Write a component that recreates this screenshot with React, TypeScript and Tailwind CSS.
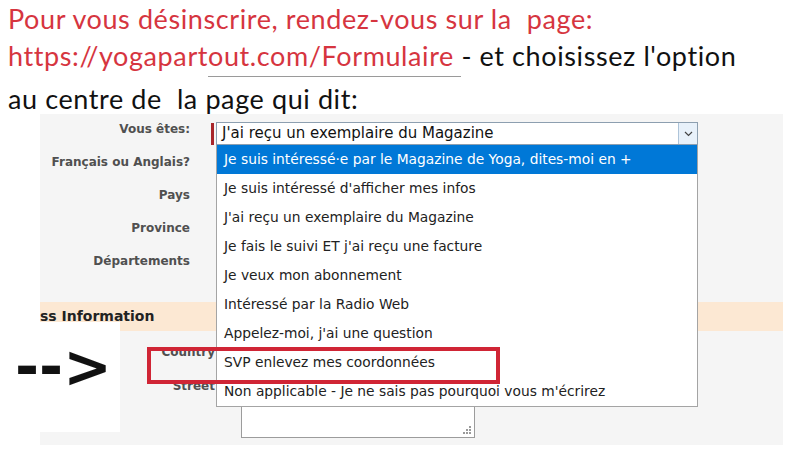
import React from 'react';

const OPTIONS = [
  'Je suis intéressé·e par le Magazine de Yoga, dites-moi en +',
  "Je suis intéressé d'afficher mes infos",
  "J'ai reçu un exemplaire du Magazine",
  "Je fais le suivi ET j'ai reçu une facture",
  'Je veux mon abonnement',
  'Intéressé par la Radio Web',
  "Appelez-moi, j'ai une question",
  'SVP enlevez mes coordonnées',
  "Non applicable - Je ne sais pas pourquoi vous m'écrirez",
];

const LABELS = ['Vous êtes:', 'Français ou Anglais?', 'Pays', 'Province', 'Départements'];

const App: React.FC = () => {
  return (
    <div className="relative w-[800px] h-[470px] overflow-hidden bg-white">
      {/* instructions */}
      <div className="relative z-10 pl-[8px] font-['Lato',sans-serif] text-[27px] tracking-[0.6px] leading-[37px] whitespace-pre text-[#111]">
        <p className="text-[#d6353f]">Pour vous désinscrire, rendez-vous sur la  page:</p>
        <p>
          <span className="text-[#d6353f]">
            https://yogapart<span className="border-b border-[#9a9a9a] pb-[4px]">out.com/Formulaire </span>
          </span>
          - et choisissez l'option
        </p>
        <p className="mt-[6px] h-[34px]">au centre de  la page qui dit:</p>
      </div>

      {/* form screenshot */}
      <div className="ml-[40px] w-[743px] h-[331px] bg-[#f5f5f5] pt-[8px] font-['DejaVu_Sans',sans-serif]">
        <div className="grid grid-cols-[150px_1fr] gap-x-[21px] auto-rows-[33px]">
          {LABELS.map((label, i) => (
            <React.Fragment key={label}>
              <div className="text-right text-[12px] leading-[14px] font-bold text-[#505050]">{label}</div>
              <div>
                {i === 0 && (
                  <div className="flex items-start gap-[2px]">
                    <div className="w-[3px] h-[22px] mt-[1px] bg-[#a8262b]" />
                    <div className="flex w-[482px] h-[23px] border border-[#8d9fb0] bg-white">
                      <span className="flex-1 pl-[5px] text-[15px] leading-[21px] text-[#111]">J'ai reçu un exemplaire du Magazine</span>
                      <span className="flex w-[19px] items-center justify-center border-l border-[#aec4d9] bg-[#e8f1fa]">
                        <svg width="9" height="6" viewBox="0 0 9 6" fill="none" stroke="#444" strokeWidth="1.2">
                          <path d="M1 1l3.5 3.5L8 1" />
                        </svg>
                      </span>
                    </div>
                  </div>
                )}
              </div>
            </React.Fragment>
          ))}
        </div>

        <div className="mt-[15px] h-[29px] bg-[#fce8d3] text-[14px] leading-[29px] font-bold text-[#222]">ss Information</div>

        <div className="grid grid-cols-[175px_1fr] gap-x-[26px] mt-[4px]">
          <div className="h-[34px] flex items-center justify-end text-[12px] font-bold text-[#505050]">Country</div>
          <div />
          <div className="pt-[10px] text-right text-[12px] leading-[14px] font-bold text-[#505050]">Street</div>
          <div className="relative mt-[9px] w-[234px] h-[60px] border border-[#9c9c9c] bg-white">
            <svg className="absolute right-[3px] bottom-[3px]" width="8" height="8" viewBox="0 0 8 8" fill="#9a9a9a">
              <rect x="6" y="0" width="2" height="2" />
              <rect x="3" y="3" width="2" height="2" />
              <rect x="6" y="3" width="2" height="2" />
              <rect x="0" y="6" width="2" height="2" />
              <rect x="3" y="6" width="2" height="2" />
              <rect x="6" y="6" width="2" height="2" />
            </svg>
          </div>
        </div>
      </div>

      {/* open dropdown list */}
      <ul className="absolute left-[216px] top-[145px] w-[482px] border border-t-0 border-[#a4a4a4] bg-white font-['DejaVu_Sans',sans-serif] text-[13.8px] text-[#222]">
        {OPTIONS.map((opt, i) => (
          <li
            key={opt}
            className={i === 0 ? 'h-[29px] leading-[29px] px-[7px] bg-[#0078d7] text-white' : 'h-[29px] leading-[29px] px-[7px]'}
          >
            {opt}
          </li>
        ))}
      </ul>

      {/* highlight box */}
      <div className="absolute left-[147px] top-[347px] w-[353px] h-[37px] border-4 border-[#d02535]" />

      {/* arrow patch */}
      <div className="absolute left-0 top-[322px] w-[120px] h-[110px] bg-white">
        <span className="absolute left-[15px] top-[15px] font-['DejaVu_Sans',sans-serif] font-bold text-[58px] leading-[60px] text-[#111]">--&gt;</span>
      </div>
    </div>
  );
};

export default App;
